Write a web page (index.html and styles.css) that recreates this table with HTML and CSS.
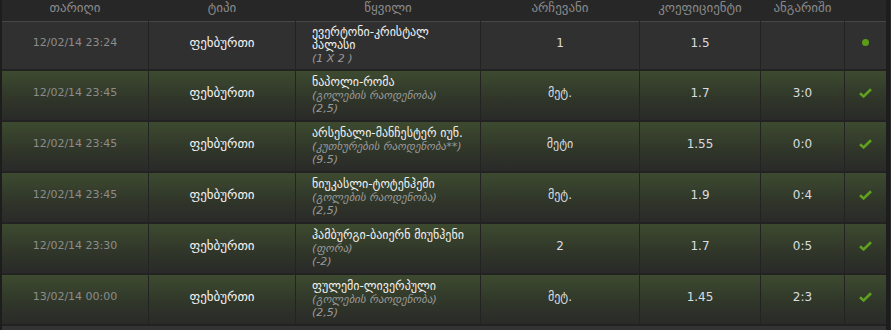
FILE: index.html
```html
<!DOCTYPE html>
<html lang="ka">
<head>
<meta charset="utf-8">
<link rel="stylesheet" href="styles.css">
</head>
<body>
<div class="page">
  <div class="cols head">
    <div>თარიღი</div>
    <div>ტიპი</div>
    <div>წყვილი</div>
    <div>არჩევანი</div>
    <div>კოეფიციენტი</div>
    <div>ანგარიში</div>
    <div></div>
  </div>
  <div class="rows">
    <div class="cols row first">
      <div class="date">12/02/14 23:24</div>
      <div class="type">ფეხბურთი</div>
      <div class="match"><span class="name">ევერტონი-კრისტალ<br>პალასი</span><span class="sub">(1 X 2 )</span></div>
      <div class="val">1</div>
      <div class="val">1.5</div>
      <div class="val"></div>
      <div class="icon"><span class="dot"></span></div>
    </div>
    <div class="cols row green">
      <div class="date">12/02/14 23:45</div>
      <div class="type">ფეხბურთი</div>
      <div class="match"><span class="name">ნაპოლი-რომა</span><span class="sub">(გოლების რაოდენობა)</span><span class="sub">(2,5)</span></div>
      <div class="val">მეტ.</div>
      <div class="val">1.7</div>
      <div class="val">3:0</div>
      <div class="icon"><svg width="13" height="10" viewBox="0 0 13 10"><path d="M1 5.2 L4.6 8.4 L12 1.2" fill="none" stroke="#5fa11f" stroke-width="2.6"/></svg></div>
    </div>
    <div class="cols row green">
      <div class="date">12/02/14 23:45</div>
      <div class="type">ფეხბურთი</div>
      <div class="match"><span class="name">არსენალი-მანჩესტერ იუნ.</span><span class="sub">(კუთხურების რაოდენობა**)</span><span class="sub">(9.5)</span></div>
      <div class="val">მეტი</div>
      <div class="val">1.55</div>
      <div class="val">0:0</div>
      <div class="icon"><svg width="13" height="10" viewBox="0 0 13 10"><path d="M1 5.2 L4.6 8.4 L12 1.2" fill="none" stroke="#5fa11f" stroke-width="2.6"/></svg></div>
    </div>
    <div class="cols row green">
      <div class="date">12/02/14 23:45</div>
      <div class="type">ფეხბურთი</div>
      <div class="match"><span class="name">ნიუკასლი-ტოტენჰემი</span><span class="sub">(გოლების რაოდენობა)</span><span class="sub">(2,5)</span></div>
      <div class="val">მეტ.</div>
      <div class="val">1.9</div>
      <div class="val">0:4</div>
      <div class="icon"><svg width="13" height="10" viewBox="0 0 13 10"><path d="M1 5.2 L4.6 8.4 L12 1.2" fill="none" stroke="#5fa11f" stroke-width="2.6"/></svg></div>
    </div>
    <div class="cols row green">
      <div class="date">12/02/14 23:30</div>
      <div class="type">ფეხბურთი</div>
      <div class="match"><span class="name">ჰამბურგი-ბაიერნ მიუნჰენი</span><span class="sub">(ფორა)</span><span class="sub">(-2)</span></div>
      <div class="val">2</div>
      <div class="val">1.7</div>
      <div class="val">0:5</div>
      <div class="icon"><svg width="13" height="10" viewBox="0 0 13 10"><path d="M1 5.2 L4.6 8.4 L12 1.2" fill="none" stroke="#5fa11f" stroke-width="2.6"/></svg></div>
    </div>
    <div class="cols row green">
      <div class="date">13/02/14 00:00</div>
      <div class="type">ფეხბურთი</div>
      <div class="match"><span class="name">ფულემი-ლივერპული</span><span class="sub">(გოლების რაოდენობა)</span><span class="sub">(2,5)</span></div>
      <div class="val">მეტ.</div>
      <div class="val">1.45</div>
      <div class="val">2:3</div>
      <div class="icon"><svg width="13" height="10" viewBox="0 0 13 10"><path d="M1 5.2 L4.6 8.4 L12 1.2" fill="none" stroke="#5fa11f" stroke-width="2.6"/></svg></div>
    </div>
  </div>
  <div class="foot"></div>
</div>
</body>
</html>
```
FILE: styles.css
```css
html, body {
  margin: 0;
  padding: 0;
  background: #2b2b2b;
  font-family: "DejaVu Sans", sans-serif;
}
.page {
  width: 884px;
  border-left: 2px solid #1d1d1d;
  border-right: 4px solid #1d1d1d;
  background: #272727;
}
.cols {
  display: grid;
  grid-template-columns: 146px 146px 184px 158px 120px 83px 41px;
  column-gap: 1px;
}
.head {
  height: 21px;
  align-items: center;
  text-align: center;
  color: #8a8a8a;
  font-size: 13px;
}
.head > div {
  padding-bottom: 8px;
}
.rows {
  display: flex;
  flex-direction: column;
  gap: 2px;
  background: #222;
  padding-bottom: 2px;
}
.row {
  height: 49px;
  background: #232323;
}
.row.first {
  height: 48px;
}
.row > div {
  display: flex;
  align-items: center;
  justify-content: center;
  padding-bottom: 6px;
  box-sizing: border-box;
}
.row.first > div {
  background: #303030;
  border-top: 1px solid #474747;
}
.row.green > div {
  background: linear-gradient(#3d4a2f, #2f3529 60%, #2a2a29);
}
.date {
  color: #8c8c8c;
  font-size: 11px;
}
.type {
  color: #f2f2f2;
  font-size: 13px;
}
.row > .match {
  flex-direction: column;
  align-items: flex-start;
  justify-content: center;
  padding: 0 0 0 16px;
  font-size: 12px;
  line-height: 13px;
}
.name {
  color: #f0f0f0;
}
.sub {
  color: #9a9a9a;
  font-style: italic;
  font-size: 11px;
}
.val {
  color: #d9dde0;
  font-size: 12px;
}
.dot {
  width: 7px;
  height: 7px;
  border-radius: 50%;
  background: #5a9c18;
}
.foot {
  height: 5px;
  background: #333;
}
```
